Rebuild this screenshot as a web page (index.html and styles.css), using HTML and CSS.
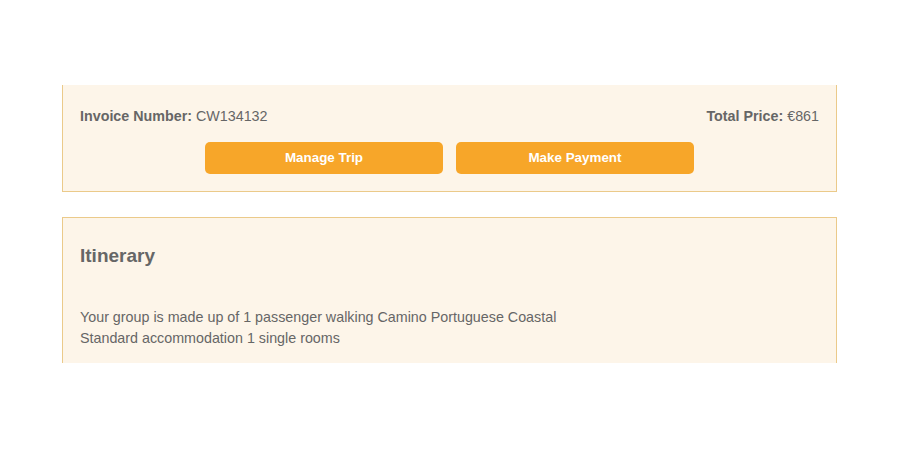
FILE: index.html
```html
<!DOCTYPE html>
<html lang="en">
<head>
  <meta charset="UTF-8" />
  <title>Booking Summary</title>
  <link rel="stylesheet" href="styles.css">
</head>
<body>

  <div class="page">
    <div class="card card-summary">
      <div class="summary-row">
        <span><b>Invoice Number:</b> CW134132</span>
        <span><b>Total Price:</b> &euro;861</span>
      </div>
      <div class="actions">
        <button class="btn">Manage Trip</button>
        <button class="btn">Make Payment</button>
      </div>
    </div>

    <div class="card card-itinerary">
      <h2>Itinerary</h2>
      <p>Your group is made up of 1 passenger walking Camino Portuguese Coastal<br>
      Standard accommodation 1 single rooms</p>
    </div>
  </div>

</body>
</html>
```

FILE: styles.css
```css
body {
  margin: 0;
  padding: 0;
  background: #ffffff;
  font-family: 'Liberation Sans', Arial, sans-serif;
  color: #666666;
  height: 450px;
  overflow: hidden;
}

.page {
  width: 775px;
  margin-left: 62px;
  padding-top: 85px;
}

.card {
  background: #fdf5e9;
  border: 1px solid #ebca8a;
  box-sizing: border-box;
}

.card-summary {
  border-top: none;
  padding: 23px 17px 17px 17px;
}

.summary-row {
  display: flex;
  justify-content: space-between;
  font-size: 14.3px;
  line-height: 17px;
}

.summary-row b {
  font-weight: bold;
}

.actions {
  display: flex;
  justify-content: center;
  gap: 13px;
  margin-top: 17px;
}

.btn {
  width: 238px;
  height: 32px;
  padding: 0 0 2px 0;
  background: #f7a629;
  color: #ffffff;
  font-family: 'Liberation Sans', Arial, sans-serif;
  font-weight: bold;
  font-size: 13.4px;
  border: none;
  border-radius: 5px;
  cursor: pointer;
}

.card-itinerary {
  margin-top: 25px;
  border-bottom: none;
  height: 146px;
  padding: 27px 17px 0 17px;
}

h2 {
  margin: 0;
  font-size: 19px;
  line-height: 22px;
  font-weight: bold;
  color: #666;
}

p {
  margin: 40px 0 0 0;
  font-size: 14.3px;
  line-height: 21px;
}
```
